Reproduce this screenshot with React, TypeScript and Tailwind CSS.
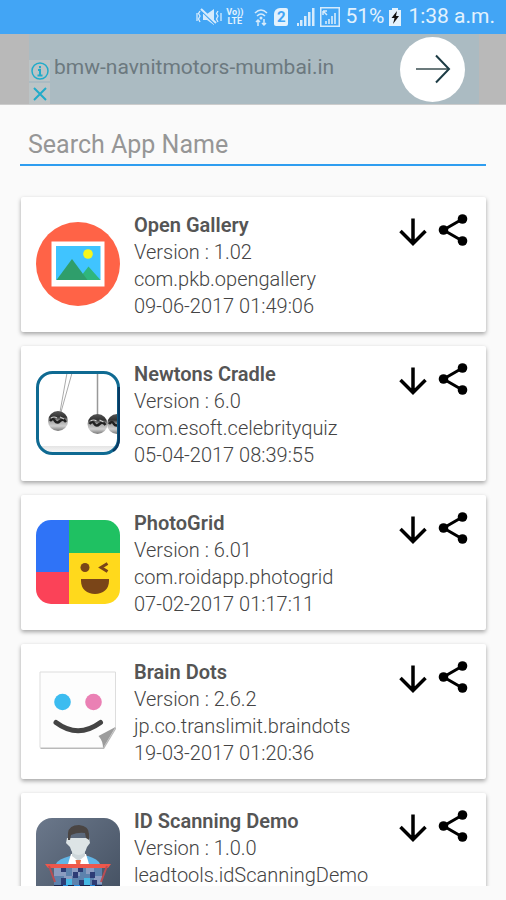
import React, { useState } from "react";

function GalleryIcon() {
    return (
        <svg viewBox="0 0 84 84" className="w-[84px] h-[84px]">
            <circle cx="42" cy="42" r="42" fill="#ff6347" />
            <rect x="15.500" y="19.500" width="53" height="45" fill="#fff" />
            <rect x="20" y="24" width="44.500" height="34" fill="#40c4ff" />
            <circle cx="52" cy="32" r="4.800" fill="#f6f61c" />
            <path d="M42 58 L52.500 44.500 L64.500 58 Z" fill="#2fb67c" />
            <path d="M20.500 58 L36 37 L51.500 58 Z" fill="#2f9e6b" />
        </svg>
    );
}

function CradleIcon() {
    return (
        <svg viewBox="0 0 84 84" className="w-[84px] h-[84px]">
            <defs>
                <linearGradient id="ball" x1="0" y1="0" x2="0" y2="1">
                    <stop offset="0" stopColor="#555" />
                    <stop offset="0.300" stopColor="#333" />
                    <stop offset="0.500" stopColor="#a5a5a5" />
                    <stop offset="0.750" stopColor="#d0d0d0" />
                    <stop offset="1" stopColor="#777" />
                </linearGradient>
                <linearGradient id="floor" x1="0" y1="0" x2="0" y2="1">
                    <stop offset="0" stopColor="#e4e4e4" />
                    <stop offset="1" stopColor="#fff" />
                </linearGradient>
                <clipPath id="frame">
                    <rect x="1.500" y="1.500" width="81" height="81" rx="15" />
                </clipPath>
            </defs>
            <g clipPath="url(#frame)">
                <rect width="84" height="84" fill="#fff" />
                <rect y="75" width="84" height="9" fill="url(#floor)" />
                <path d="M31 2 L24 41 M36 2 L25 41" stroke="#aaa" strokeWidth="1" />
                <path d="M61.500 2 V44" stroke="#999" strokeWidth="1.500" />
                <circle cx="22" cy="50" r="10" fill="url(#ball)" />
                <circle cx="61.500" cy="53" r="10" fill="url(#ball)" />
                <circle cx="81" cy="53" r="10" fill="url(#ball)" />
                <path d="M14 50 q3 -4 5 0 q2 3 5 0 q3 -3 6 1" fill="none" stroke="#222" strokeWidth="2.500" />
                <path d="M15 47 q3 -2 6 0 M24 46 l4 2" fill="none" stroke="#ccc" strokeWidth="1.200" />
                <path d="M53.500 53 q3 -4 5 0 q2 3 5 0 q3 -3 6 1" fill="none" stroke="#222" strokeWidth="2.500" />
                <path d="M54.500 50 q3 -2 6 0 M63.500 49 l4 2" fill="none" stroke="#ccc" strokeWidth="1.200" />
                <path d="M73 53 q3 -4 5 0 q2 3 5 0" fill="none" stroke="#222" strokeWidth="2.500" />
            </g>
            <rect x="1.500" y="1.500" width="81" height="81" rx="15" fill="none" stroke="#0f6a92" strokeWidth="3" />
            <path d="M82.800 16 V68 Q82.800 76 77 80" fill="none" stroke="#083a63" strokeWidth="2.400" />
        </svg>
    );
}

function PhotoGridIcon() {
    return (
        <svg viewBox="0 0 84 84" className="w-[84px] h-[84px]">
            <defs>
                <clipPath id="grid">
                    <rect width="84" height="84" rx="15" />
                </clipPath>
            </defs>
            <g clipPath="url(#grid)">
                <rect width="33" height="52" fill="#2f73f7" />
                <rect y="52" width="33" height="32" fill="#fb4258" />
                <rect x="33" width="51" height="33" fill="#1fc162" />
                <rect x="33" y="33" width="51" height="51" fill="#ffd91c" />
            </g>
            <circle cx="49" cy="47.500" r="4.500" fill="#7a4518" />
            <path d="M71.500 43.500 L65 47.500 L71.500 51.500" fill="none" stroke="#7a4518" strokeWidth="3" />
            <path d="M45 59 H73 V61 C73 69 67 74 59 74 C51 74 45 69 45 61 Z" fill="#7a4518" />
        </svg>
    );
}

function BrainDotsIcon() {
    return (
        <svg viewBox="0 0 84 84" className="w-[84px] h-[84px]">
            <path d="M4.500 4.500 H80 V60 L68 80 H4.500 Z" fill="#b9b9b9" />
            <path d="M4 3 H79.500 V58 L67 78.500 H4 Z" fill="#fdfdfd" stroke="#ddd" strokeWidth="1" />
            <path d="M79.500 58 L62.500 67 Q67 72 67 79 Z" fill="#9c9c9c" />
            <circle cx="26.500" cy="33" r="8.300" fill="#3cbcf0" />
            <circle cx="57.500" cy="33" r="8.300" fill="#ea80b4" />
            <path d="M20 53.500 Q42 70 64.500 53.500" fill="none" stroke="#444" strokeWidth="5" strokeLinecap="round" />
        </svg>
    );
}

function ScanningIcon() {
    return (
        <svg viewBox="0 0 84 84" className="w-[84px] h-[84px]">
            <defs>
                <linearGradient id="slate" x1="0" y1="0" x2="1" y2="1">
                    <stop offset="0" stopColor="#6b788b" />
                    <stop offset="1" stopColor="#434f60" />
                </linearGradient>
            </defs>
            <rect width="84" height="84" rx="16" fill="url(#slate)" />
            <path d="M20 46 Q22 41 34 38 H52 Q62 41 64 46 Z" fill="#62b5e5" />
            <path d="M35 36 L32 46 H53 L50 36 Z" fill="#fff" />
            <path d="M36 30 H49 V38 L42.500 43 L36 38 Z" fill="#cdd6da" />
            <path d="M39.500 42 H45 L44 47 H40.500 Z" fill="#ee6a43" />
            <path d="M31 20 H53 L54 25 L51 29 Q49 37 42.500 37 Q36 37 34 29 L30 25 Z" fill="#dde4e6" />
            <path d="M32 22 V15 Q33 7 43 7 Q53 8 53 16 V22 L50 20 L49 15 Q42 14 35 17 L34 22 Z" fill="#4a4543" />
            <rect x="18" y="50" width="48" height="34" fill="#5d82ad" />
            <path d="M18 50 h12 v8 h-12z M36 50 h8 v8 h-8z M50 50 h8 v6 h-8z M28 58 h8 v8 h-8z M58 58 h8 v8 h-8z" fill="#8b9cc0" />
            <path d="M25 48 h5 v6 h-5z M42 48 h5 v6 h-5z M37 54 h5 v6 h-5z M54 54 h5 v6 h-5z M25 60 h5 v8 h-5z M43 62 h5 v6 h-5z M56 62 h5 v6 h-5z" fill="#2d3c75" />
            <path d="M30 61 h6 v7 h-6z M48 60 h6 v8 h-6z" fill="#45b8e4" />
            <path d="M9 46 H75 L72 50 H12 Z" fill="#ee574b" />
            <path d="M13 48 L19 64 M71 48 L65 64" stroke="#b94d54" strokeWidth="2" />
            <path d="M18 67 H66 V84 H18 Z" fill="#17244c" />
            <path d="M27 67 h5 v3 h-5z M38 67 h6 v3 h-6z M54 67 h5 v3 h-5z" fill="#2489dc" />
        </svg>
    );
}

const apps = [
    { name: "Open Gallery", version: "1.02", pkg: "com.pkb.opengallery", date: "09-06-2017 01:49:06", Icon: GalleryIcon },
    { name: "Newtons Cradle", version: "6.0", pkg: "com.esoft.celebrityquiz", date: "05-04-2017 08:39:55", Icon: CradleIcon },
    { name: "PhotoGrid", version: "6.01", pkg: "com.roidapp.photogrid", date: "07-02-2017 01:17:11", Icon: PhotoGridIcon },
    { name: "Brain Dots", version: "2.6.2", pkg: "jp.co.translimit.braindots", date: "19-03-2017 01:20:36", Icon: BrainDotsIcon },
    { name: "ID Scanning Demo", version: "1.0.0", pkg: "leadtools.idScanningDemo", date: "", Icon: ScanningIcon },
];

function StatusBar() {
    return (
        <div className="flex h-[34px] shrink-0 items-center justify-end bg-[#42a5f5] pr-[11px] text-[21px] text-[#e3f2fd]">
            <svg viewBox="0 0 26 20" className="mr-1 h-5 w-[26px]" fill="none" stroke="#d6ebfc">
                <path d="M7 7 H11 L18 2 V18 L11 13 H7 Z" fill="#d6ebfc" stroke="none" />
                <path d="M6 4 L20 18" stroke="#42a5f5" strokeWidth="2" />
                <path d="M5 2 L20 16" strokeWidth="2" />
                <path d="M4 4 l-1.500 2.500 l1.500 2.500 l-1.500 3 l1.500 3 M1 6 v8" strokeWidth="1.300" />
                <path d="M22 4 l-1.500 2.500 l1.500 2.500 l-1.500 3 l1.500 3 M25 6 v8" strokeWidth="1.300" />
            </svg>
            <div className="mr-[11px] text-center text-[9px] font-bold leading-[9px]">
                <div>Vo))</div>
                <div>LTE</div>
            </div>
            <svg viewBox="0 0 14 20" className="mr-[6px] h-5 w-[14px]" fill="none" stroke="#d6ebfc">
                <path d="M1 6 Q7 0 13 6 M3 9 Q7 5 11 9" strokeWidth="1.500" />
                <circle cx="7" cy="11" r="1.500" fill="#d6ebfc" stroke="none" />
                <path d="M4 19 V13 M2 15 L4 13 L6 15 M10 12 V18 M8 16 L10 18 L12 16" strokeWidth="1.500" />
            </svg>
            <div className="mr-[9px] flex h-[18px] w-[14px] items-center justify-center rounded-xs rounded-tl-md bg-[#e3f2fd] text-[15px] font-bold text-[#42a5f5]">2</div>
            <svg viewBox="0 0 18 18" className="mr-[5px] h-[18px] w-[18px]" fill="#d6ebfc">
                <path d="M0 15 h2 v3 h-2z M3 12 h2.500 v6 h-2.500z M7 8 h2.500 v10 h-2.500z M11 4 h2.500 v14 h-2.500z M15 0 h2.500 v18 h-2.500z" />
            </svg>
            <svg viewBox="0 0 20 20" className="mr-[5px] h-5 w-5" fill="none" stroke="#d6ebfc">
                <rect x="0.750" y="0.750" width="18.500" height="18.500" strokeWidth="1.500" />
                <path d="M3 4 h4 M3 4 v4 M3 4 l4 4" strokeWidth="1.500" />
                <path d="M6 17 v-3 M9 17 v-5 M12 17 v-8 M15 17 v-11" strokeWidth="1.600" />
            </svg>
            <span>51%</span>
            <svg viewBox="0 0 12 18" className="ml-[5px] mr-[7px] h-[18px] w-3">
                <path d="M0 2 H3 V0 H9 V2 H12 V18 H0 Z" fill="#e3f2fd" />
                <path d="M8 3 L2.500 10 H5.500 L4 16 L10 8 H7 Z" fill="#111" />
            </svg>
            <span>1:38 a.m.</span>
        </div>
    );
}

function AdBanner() {
    return (
        <div className="shrink-0 border-b border-[#ccc] bg-[#b9b9b9] pl-[29px] pr-[27px]">
            <div className="flex h-[70px] items-center bg-[#abbbc2] pr-[14px]">
                <div className="flex w-[21px] flex-col gap-[2px] self-end">
                    <button type="button" aria-label="Ad information" className="flex h-[21px] items-center justify-center bg-[#bcc4c6]">
                        <svg viewBox="0 0 18 18" className="h-[18px] w-[18px]" fill="none" stroke="#22abc9">
                            <circle cx="9" cy="9" r="8" strokeWidth="1.500" />
                            <path d="M9 4 v2.200 M7 8 h2 v5 M6.500 13.500 h5" strokeWidth="2" />
                        </svg>
                    </button>
                    <button type="button" aria-label="Close ad" className="flex h-[21px] items-center justify-center bg-[#bcc4c6]">
                        <svg viewBox="0 0 14 14" className="h-[14px] w-[14px]" stroke="#22abc9" strokeWidth="2">
                            <path d="M1 1 L13 13 M13 1 L1 13" />
                        </svg>
                    </button>
                </div>
                <a href="#ad" className="ml-1 flex-1 pb-[2px] text-[21px] text-[#6c797f]">bmw-navnitmotors-mumbai.in</a>
                <button type="button" aria-label="Open ad" className="flex h-[65px] w-[65px] items-center justify-center rounded-full bg-white">
                    <svg viewBox="0 0 36 30" className="h-[30px] w-9" fill="none">
                        <path d="M1 15 H33" stroke="#6b7a7c" strokeWidth="2" />
                        <path d="M21 1.500 L34 15 L21 28.500" stroke="#1d3c45" strokeWidth="2" />
                    </svg>
                </button>
            </div>
        </div>
    );
}

function App() {
    const [search, setSearch] = useState("");

    const shownApps = apps.filter((app) => app.name.toLowerCase().includes(search.toLowerCase()));

    return (
        <div className="flex h-screen flex-col overflow-hidden bg-[#fafafa] pb-[14px] font-[Roboto,sans-serif]">
            <StatusBar />
            <AdBanner />
            <div className="shrink-0 px-5 pt-5">
                <input
                    type="text"
                    aria-label="Search App Name"
                    placeholder="Search App Name"
                    value={search}
                    onChange={(e) => setSearch(e.target.value)}
                    className="block h-[41px] w-full border-b-2 border-[#2e9df0] px-2 text-[25px] text-[#555] outline-none placeholder:text-[#969696]"
                />
            </div>
            <ul className="mt-5 flex min-h-0 flex-1 flex-col gap-[14px] overflow-hidden pl-[21px] pr-5 pt-[11px]">
                {shownApps.map(({ name, version, pkg, date, Icon }) => (
                    <li key={pkg} className="flex h-[135px] shrink-0 items-start rounded-xs bg-white px-[15px] shadow-[0_2px_4px_rgba(0,0,0,0.35)]">
                        <div className="mt-[25px] shrink-0">
                            <Icon />
                        </div>
                        <div className="ml-[14px] mt-[15px] min-w-0 flex-1 text-xl leading-[27px] font-light text-[#444]">
                            <h2 className="font-semibold text-[#555]">{name}</h2>
                            <p>Version : {version}</p>
                            <p>{pkg}</p>
                            {date && <p>{date}</p>}
                        </div>
                        <div className="mr-[3px] mt-[17px] flex items-center gap-[11px]">
                            <button type="button" aria-label={"Download " + name}>
                                <svg viewBox="0 0 28 28" className="mt-1 h-7 w-7" fill="none" stroke="#000" strokeWidth="3.500">
                                    <path d="M14 0.500 V26 M1.500 13 L14 25.500 L26.500 13" />
                                </svg>
                            </button>
                            <button type="button" aria-label={"Share " + name}>
                                <svg viewBox="0 0 30 32" className="h-8 w-[30px]">
                                    <path d="M24.500 5 L5.500 16 L24.500 27" fill="none" stroke="#000" strokeWidth="3" />
                                    <circle cx="24.500" cy="5" r="4.800" />
                                    <circle cx="5.500" cy="16" r="4.800" />
                                    <circle cx="24.500" cy="27" r="4.800" />
                                </svg>
                            </button>
                        </div>
                    </li>
                ))}
            </ul>
        </div>
    );
}

export default App;
